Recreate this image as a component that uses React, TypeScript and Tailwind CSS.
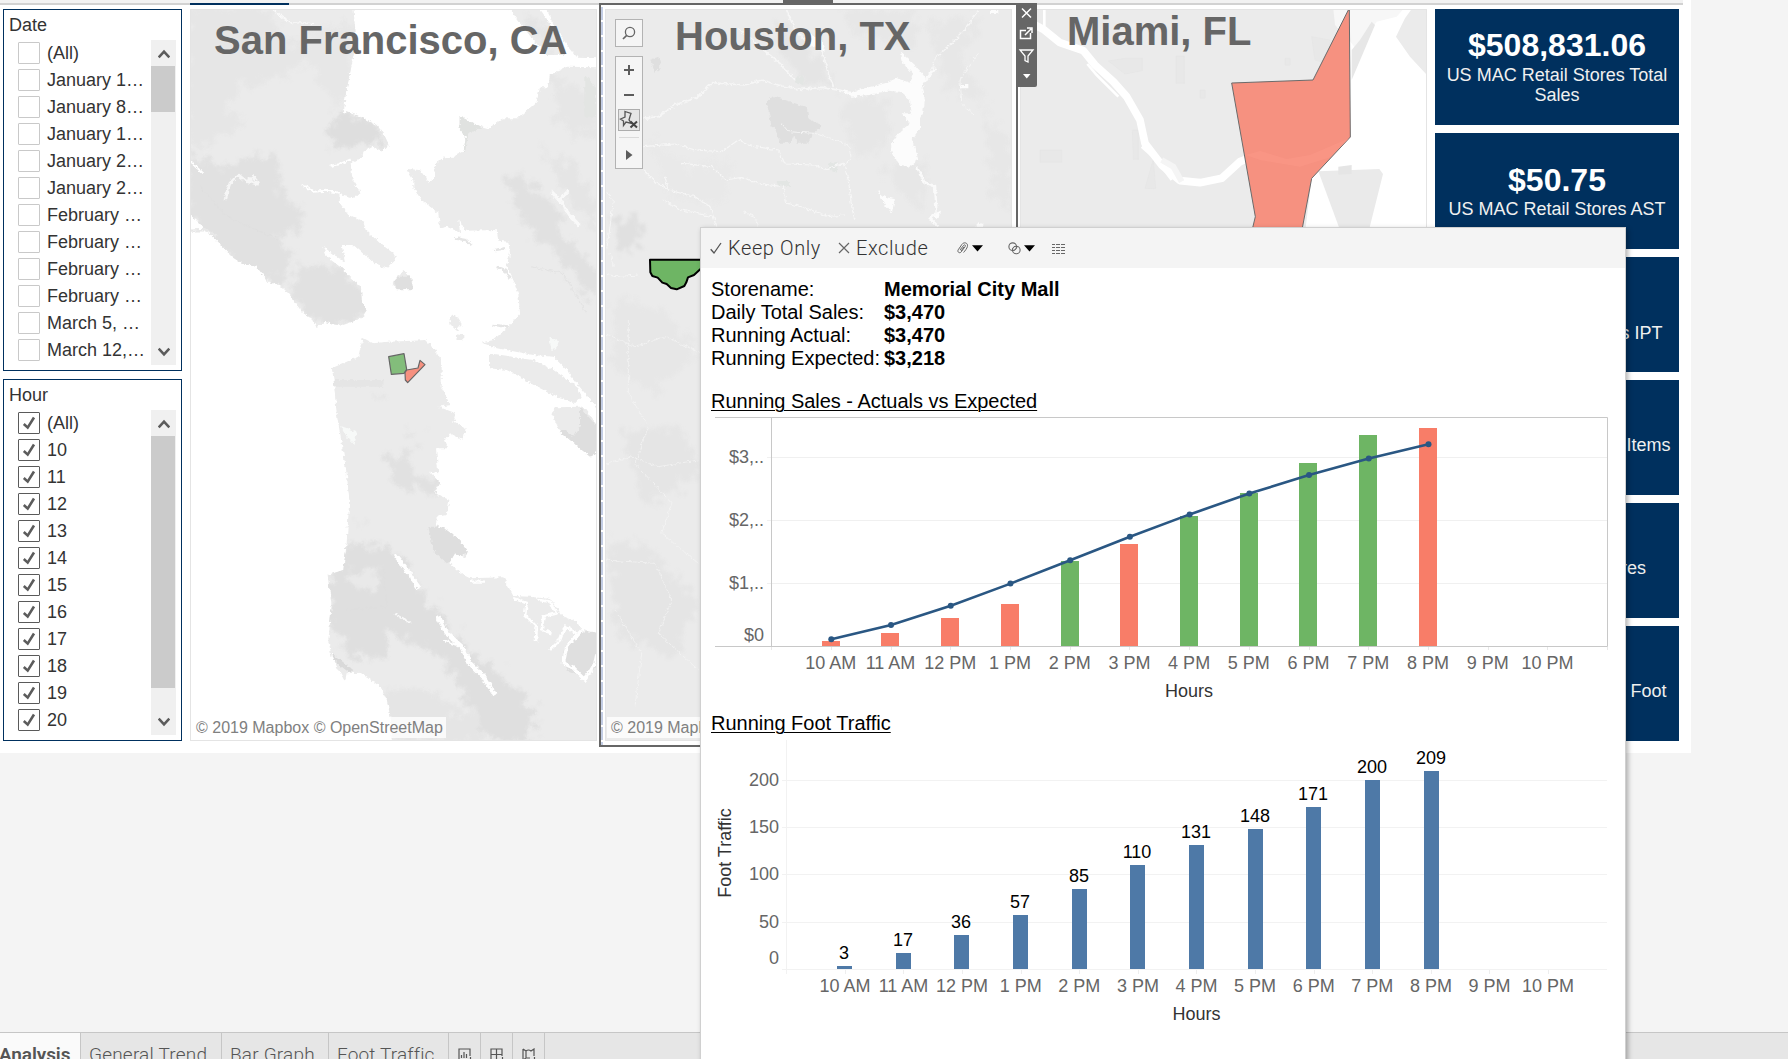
import React from "react";

const sans = "font-['Liberation_Sans',Arial,sans-serif]";

const dates = ["(All)", "January 1…", "January 8…", "January 1…", "January 2…", "January 2…", "February …", "February …", "February …", "February …", "March 5, …", "March 12,…"];
const hours = ["(All)", "10", "11", "12", "13", "14", "15", "16", "17", "18", "19", "20"];

function Chevron({ down = false }: { down?: boolean }) {
  return (
    <svg width="12" height="10" viewBox="0 0 12 10" className={down ? "rotate-180" : ""}>
      <path d="M0.7 8.3L6 2.6L11.3 8.3" fill="none" stroke="#5c5c5c" strokeWidth="2.6" />
    </svg>
  );
}

function FilterPanel({ title, items, checked, thumb }: { title: string; items: string[]; checked: boolean; thumb: string }) {
  return (
    <section className="h-[362px] w-[179px] border border-[#00305e] bg-white text-[18px] text-[#333]">
      <h2 className="h-[30px] pl-[5px] pt-[4px] leading-[22px]">{title}</h2>
      <div className="flex justify-between pr-[5px]">
        <ul className="-mt-px pl-[14px]">
          {items.map((t, i) => (
            <li key={i} className="flex h-[27px] items-center gap-[7px] whitespace-nowrap leading-[22px]">
              <span className={"flex h-[22px] w-[22px] items-center justify-center rounded-[1px] border bg-white " + (checked ? "border-[#5a5a5a]" : "border-[#c9c9c9]")}>
                {checked && (
                  <svg width="14" height="14" viewBox="0 0 14 14">
                    <path d="M1.8 8L5.7 11.6L12 1.5" fill="none" stroke="#5c5c5c" strokeWidth="2.6" />
                  </svg>
                )}
              </span>
              <span>{t}</span>
            </li>
          ))}
        </ul>
        <div className="flex h-[325px] w-[25px] flex-col justify-between bg-[#f0f0f0]">
          <div>
            <div className="flex h-[26px] items-center justify-center pt-[2px]"><Chevron /></div>
            <div className={"w-[24px] bg-[#cbcbcb] " + thumb} />
          </div>
          <div className="flex h-[26px] items-center justify-center"><Chevron down /></div>
        </div>
      </div>
    </section>
  );
}

function Defs({ id, seed }: { id: string; seed: number }) {
  return (
    <defs>
      <filter id={id + "rough"} x="0" y="0" width="100%" height="100%" colorInterpolationFilters="sRGB">
        <feTurbulence type="fractalNoise" baseFrequency="0.09" numOctaves="3" seed={seed} />
        <feDisplacementMap in="SourceGraphic" scale="14" xChannelSelector="R" yChannelSelector="G" />
      </filter>
      <filter id={id + "soft"} x="-10%" y="-10%" width="120%" height="120%" colorInterpolationFilters="sRGB">
        <feTurbulence type="fractalNoise" baseFrequency="0.03" numOctaves="4" seed={seed + 3} />
        <feDisplacementMap in="SourceGraphic" scale="90" xChannelSelector="R" yChannelSelector="G" />
        <feGaussianBlur stdDeviation="4" />
      </filter>
    </defs>
  );
}

const SF_LAND = [
  "M20 20H520L524 70L528 110L522 160L508 230L497 280L492 335L530 345L590 375L610 400L627 435L605 452L575 440L550 455L548 470L512 490L518 540L540 575L520 593L478 582L480 610L505 645L550 665L557 690L600 730L640 760L648 775L620 805L590 795L560 770L520 735L485 735L495 785L470 770L430 740L440 770L480 800L520 840L543 860L545 900L560 930L545 955L490 975L430 965L410 985L400 960L365 935L330 885L300 855L265 845L230 800L185 790L155 770L110 720L70 680L20 635Z",
  "M985 20H1075L1130 100L1160 165L1100 165L1060 120L1020 70Z",
  "M1095 20H1260V172L1190 170L1150 120L1115 60Z",
  "M1260 202L1160 200L1110 225L1105 262L1080 262L1070 305L1015 355L970 355L925 385L890 375L838 348V385L858 410L850 455L820 470L795 472L765 495L762 535L745 545L720 510L680 507L700 540V565L725 600L775 640L780 685L800 680L840 697L835 658L855 692L950 690L955 722L985 725L990 760L980 800L1000 840L1015 880L1020 940L985 980L940 1020L905 1028L950 1045L1060 1065L1120 1070L1160 1110L1190 1150L1215 1180L1260 1235Z",
  "M930 1060L1060 1080L1120 1110L1150 1130L1195 1165L1205 1190L1185 1210L1140 1195L1080 1165L1020 1130L980 1110L930 1105Z",
  "M1115 1240L1130 1222L1200 1220L1220 1228L1260 1290V1340L1235 1375L1140 1295Z",
  "M635 850L670 810L695 835L700 868L650 868Z",
  "M808 955L825 942L845 975L830 992L812 975Z",
  "M825 1003L850 1005V1020L830 1020Z",
  "M548 1013L580 1030L625 1025L700 1022L735 1020L765 1050L785 1085V1160L810 1215L775 1220L828 1240L820 1265L857 1285L850 1320L810 1300L795 1320L805 1345H768L775 1420L750 1415L780 1450L765 1480L808 1500L800 1545L770 1550L768 1575L800 1590L838 1620L865 1658L855 1672L825 1660L808 1690L850 1725L870 1735L970 1732L1000 1788L1050 1790L1110 1797L1150 1850L1190 1865L1205 1890L1260 1900V2230H636L632 2150L620 2100L600 2060L545 2018L500 2020L495 2045L455 1970L445 1920L455 1820L443 1725L490 1710L500 1630L508 1500L500 1420L485 1330L470 1240L460 1130L455 1105L500 1085L535 1070Z",
];

function SanFranciscoMap() {
  return (
    <svg className="block h-full w-full" viewBox="33 30 1215 2190" preserveAspectRatio="none">
      <Defs id="sf" seed={4} />
      <clipPath id="sfland">{SF_LAND.map((d, i) => <path key={i} d={d} />)}</clipPath>
      <g filter="url(#sfrough)">
        <g fill="#ebebeb">{SF_LAND.map((d, i) => <path key={i} d={d} />)}</g>
        <g clipPath="url(#sfland)">
          <g fill="#e1e1e1" filter="url(#sfsoft)">
            <path d="M20 20H260L300 110L400 150L330 230L200 250L130 330L200 360L90 440L20 420Z" fill="#e6e6e6" />
            <path d="M370 100L520 60V300L470 320L420 250L390 180Z" fill="#e7e7e7" />
            <path d="M20 460L130 500L250 460L300 500L310 600L370 640L360 700L300 700L340 780L300 860L180 800L20 650Z" />
            <path d="M350 800L450 790L550 870L570 940L430 985L330 890Z" />
            <path d="M440 380L500 335L580 370L625 440L540 430L460 440Z" fill="#dedede" />
            <path d="M970 530L1050 540L1120 610L1160 720L1251 800V900L1190 850L1110 740L1040 680L1000 600Z" />
            <path d="M1080 450L1180 500L1251 620V700L1150 560Z" fill="#e5e5e5" />
            <path d="M1110 220L1251 300V420L1140 380Z" fill="#e6e6e6" />
            <path d="M610 1370L690 1360L700 1410L780 1450L760 1485L650 1460Z" />
            <path d="M500 1630L640 1640L700 1740L770 1820L850 1940L960 2010L1080 2140L1040 2223H920L850 2080L780 1970L690 1930L620 1880V1980L500 1960L450 1860V1720Z" fill="#dfdfdf" />
            <path d="M490 1720L600 1700L590 1760L530 1770Z" fill="#e9e9e9" />
            <path d="M570 2080L700 2060L780 2100L900 2150V2223H640Z" fill="#e5e5e5" />
            <path d="M590 1175H615V1195H590ZM680 1300L720 1295L710 1330L680 1325ZM535 1560L570 1570L555 1595Z" fill="#e4e4e4" />
            <path d="M1020 40L1090 60L1130 140L1100 150Z" fill="#e5e5e5" />
          </g>
          <path d="M460 1140H610V1160H460Z" fill="#e5e5e5" />
          <path d="M455 1960L520 2010L510 2020L460 1980Z" fill="#d9d9d9" />
          <path d="M840 345L915 380L865 400L855 455L838 450Z" fill="#e0e2e0" />
          <path d="M1213 225L1248 260V350H1213Z" fill="#e3e5e3" />
          <path d="M745 1580L790 1580L838 1620L865 1658L800 1690L760 1650Z" fill="#dedede" />
          <path d="M1200 1220L1260 1290V1340L1235 1375L1140 1295L1150 1290L1180 1310L1200 1280Z" fill="#dedede" />
          <path d="M635 830L690 830L700 868H650Z" fill="#dfdfdf" />
          <path d="M1150 1950L1200 1900L1251 1890V2000L1210 2030L1160 2010Z" fill="#dfdfdf" />
          <path d="M60 560L140 650L230 690L300 720M1050 800L1150 820L1220 940M500 1830L620 1820L610 1700" fill="none" stroke="#dedede" strokeWidth="2" />
        </g>
        <g fill="none" stroke="#fff" strokeLinejoin="round">
          <path d="M135 600L150 550L175 525L200 545L222 530L232 552L205 545" strokeWidth="9" opacity=".7" />
          <path d="M365 553L400 575L440 572L480 578M452 497L480 492L512 478M30 485L70 520" strokeWidth="6" />
          <path d="M280 30L330 68L400 70" strokeWidth="4" opacity=".7" />
          <path d="M1115 575L1145 610L1165 640L1198 676M1140 600L1165 572" strokeWidth="10" opacity=".7" />
          <path d="M645 1665L680 1710L718 1765" strokeWidth="13" />
          <path d="M645 1842L690 1868L672 1855" strokeWidth="5" opacity=".8" />
          <path d="M775 1850L800 1900L845 1940L870 1990L910 2030L945 2085" strokeWidth="14" />
          <path d="M790 1920L830 1935" strokeWidth="6" />
          <path d="M1000 1795L1040 1810L1035 1845L1070 1880L1068 1925M1075 1800L1110 1805L1130 1840L1090 1850L1085 1890L1115 1900M1110 1950L1140 1920L1155 1880L1190 1900" strokeWidth="8" />
          <path d="M1205 1890L1160 1940L1150 1990L1180 2005L1215 2040L1245 1990L1251 1960" strokeWidth="10" />
          <path d="M870 1745H915M560 795L595 835" strokeWidth="7" />
          <path d="M30 692L80 690L110 708" stroke="#e8e8e8" strokeWidth="7" />
          <path d="M825 715L858 720L875 735M945 750L975 745M950 800L975 810L990 835M940 975L985 980" stroke="#e5e5e5" strokeWidth="8" />
        </g>
        <path d="M483 1278L530 1295L524 1335L500 1310ZM1108 1012L1140 1025L1115 1055Z" fill="#f7f9f8" />
      </g>
      <g stroke="#666" strokeWidth="3.5" strokeLinejoin="round">
        <path d="M626 1070L672 1061L680 1108L672 1120L634 1123Z" fill="#83bd7b" />
        <path d="M675 1118L680 1110L714 1104L720 1081L735 1094L683 1148L676 1140Z" fill="#f6907f" />
      </g>
    </svg>
  );
}

function HoustonMap() {
  return (
    <svg className="block h-full w-full" viewBox="33 30 1215 2190" preserveAspectRatio="none">
      <Defs id="ho" seed={9} />
      <rect x="30" y="27" width="1221" height="2196" fill="#ebebeb" />
      <g fill="#e7e7e7" filter="url(#hosoft)">
        <path d="M540 60L640 130L700 220L690 260L620 240L540 150Z" fill="#e5e5e5" />
        <path d="M730 30H960V130L850 120L760 90Z" />
        <path d="M1000 60L1160 50L1100 170L1180 300L1060 280Z" />
        <path d="M740 300L880 290L880 440L780 470Z" />
        <path d="M1170 330L1251 440V640L1190 560Z" />
        <path d="M160 420L300 500L420 480L380 620L220 590Z" fill="#e9e9e9" />
        <path d="M860 500L1000 480L980 620L900 560Z" />
        <path d="M50 660L130 655L140 740L80 760Z" fill="#e0e0e0" />
        <path d="M50 900L200 920L310 1050L180 1180L60 1100Z" />
        <path d="M80 1300L260 1280L320 1420L150 1520ZM40 1620L150 1640L310 1800L240 1980L60 1900Z" fill="#e5e5e5" />
      </g>
      <g filter="url(#horough)">
        <path d="M515 305L535 288L636 322L640 358L680 375L655 400L640 428H605L598 405L588 428H555L540 385L530 380Z" fill="#dfdfdf" />
        <path d="M165 180L190 170L198 195L182 222Z" fill="#dfdfdf" />
        <path d="M545 543H585V560H550ZM700 490L730 485L725 515L705 510ZM600 235L625 225V255L600 250Z" fill="#e3e6e4" />
      </g>
      <g fill="none" stroke="#f6f6f6" strokeWidth="3.5" filter="url(#horough)">
        <path d="M145 355L190 350L240 315L310 290L350 248L400 252L450 255L500 240L560 258L620 268L680 262L740 272" strokeWidth="5" />
        <path d="M430 85L500 145L555 190L600 240M575 30L600 90L640 130L680 150L700 220L715 258" strokeWidth="5" />
        <path d="M145 440L240 432L300 450L380 455L430 420L480 440L550 450L570 492L660 495L690 508L745 490L760 540L770 620L780 660" />
        <path d="M145 510L180 545L220 570L300 590L345 620L365 680M205 600L260 630L350 650M210 530L220 570" />
        <path d="M260 490L350 500L390 540L440 532L490 550L565 560L575 610L620 620L700 650L750 645" />
        <path d="M560 370L580 395L660 400L760 435L770 480L745 495M445 635L480 650L490 680M1100 300L1095 240L1120 200L1150 160M1100 310L1140 345" strokeWidth="2.5" />
        <path d="M1010 220L1020 175L1060 140L1110 90L1150 30" />
        <path d="M30 570L55 600L45 680L35 750M35 820L60 830L130 825M45 760L55 800" strokeWidth="2.5" />
        <path d="M30 1000L120 1040L210 1010L320 1060M100 960V1180L160 1280L120 1390L230 1510L200 1600L310 1690M30 1390L110 1370L190 1400L310 1380M30 1680L180 1690L230 1800L190 1900L310 2010M60 1830L140 1960L120 2120" strokeWidth="2" />
      </g>
      <g fill="#fcfcfc" filter="url(#horough)">
        <path d="M735 270L770 275L820 262L870 250L905 235L945 248L955 225L920 185L915 155L960 195L985 225L995 240L980 265L990 300L985 335L975 355V385L950 420L965 460L970 480L945 500L915 495L890 460L888 430L915 395L945 370L920 340L950 340L945 300L915 275L880 272L820 285L770 290Z" />
        <path d="M845 570L870 590L900 598L890 640L870 615ZM1010 640L1035 635L1030 655L1010 650ZM1185 30H1210V42H1185ZM1098 255H1120V265H1098ZM1145 670L1165 675V690H1145ZM640 100L680 120L690 155L650 135Z" />
        <path d="M965 500L990 550L1020 558L1025 640L1005 655L1030 680" fill="none" stroke="#fafafa" strokeWidth="7" />
        <path d="M990 245L1010 215L1025 205" fill="none" stroke="#fafafa" strokeWidth="6" />
      </g>
      <path d="M165 779H330V795L314 809L297 825L279 832L274 847L268 858L245 868L228 864L215 852L202 848L188 833L172 828L166 817Z" fill="#6eb564" stroke="#000" strokeWidth="6" strokeLinejoin="round" />
    </svg>
  );
}

function MiamiMap() {
  return (
    <svg className="block h-full w-full" viewBox="33 30 1215 2190" preserveAspectRatio="none">
      <rect x="30" y="27" width="1221" height="2196" fill="#ebebeb" />
      <path d="M295 183L345 175H397V212L345 222ZM498 168H523V250H498ZM570 270H585V294H570ZM90 450H155V487H90ZM367 390H385V478H370ZM405 565L430 478L437 566ZM825 175H840V195H825ZM905 110L960 120L950 190L915 180Z" fill="#e8e8e8" stroke="#e5e5e5" strokeWidth="2" />
      <path d="M975 40L1060 35L1205 27L1185 55L1175 75L1158 110L1200 170L1251 225V700H885L905 535L1020 410V150L975 70Z" fill="#fff" />
      <path d="M970 27H1180L1160 50L1100 65L1040 150L1010 110L975 75Z" fill="#f7f7f7" />
      <path d="M1085 65L1095 75L1025 240V150L1050 120Z" fill="#e7e7e7" />
      <path d="M925 514L1108 507L1119 522L1077 690H990Z" fill="#eaeaea" />
      <path d="M985 500L1025 495V522L985 524Z" fill="#e5e5e5" />
      <path d="M75 75L100 88L150 128L220 152L255 195L310 245L350 290L390 360L405 430L455 495L510 542L570 548L635 535L690 485L740 465L800 480L900 470L1015 425" fill="none" stroke="#fff" strokeWidth="23" strokeLinejoin="round" />
      <path d="M103 27V80M232 192L260 225L325 290M395 440L440 480L485 540" fill="none" stroke="#fff" strokeWidth="8" />
      <path d="M455 480L490 500L515 545" fill="none" stroke="#f5f5f5" strokeWidth="18" />
      <path d="M1015 30H1018L1021 411L905 535L874 700H724L736 650L665 249L909 240Z" fill="#f69180" stroke="#6b6b6b" strokeWidth="3" />
      <path d="M708 465L750 453L830 477L900 465L1018 415L960 472L870 500L750 480Z" fill="#fb9787" opacity=".6" />
    </svg>
  );
}

function MapPane({ title, titleClass, children, credit = true }: { title: string; titleClass: string; children: React.ReactNode; credit?: boolean }) {
  return (
    <div className="relative h-[732px] w-[407px] border border-[#e4e4e4] bg-white">
      {children}
      <h1 className={"absolute whitespace-nowrap text-[40px] font-bold leading-[46px] text-[#666] " + titleClass}>{title}</h1>
      {credit && (
        <div className="absolute bottom-[2px] left-[1px] h-[21px] whitespace-nowrap bg-white/80 pl-[4px] pr-[3px] text-[16px] leading-[21px] text-[#808080]">© 2019 Mapbox © OpenStreetMap</div>
      )}
    </div>
  );
}

function MapControls() {
  return (
    <div className="absolute left-[9px] top-[9px] flex flex-col gap-[9px]">
      <div className="flex h-[28px] w-[28px] items-center justify-center border border-[#b3b3b3] bg-[#f5f5f5]">
        <svg width="14" height="14" viewBox="0 0 14 14" fill="none" stroke="#666" strokeWidth="1.3"><circle cx="8" cy="6" r="4.6" /><path d="M4.7 9.3L1 13" strokeWidth="1.7" /></svg>
      </div>
      <svg className="border border-[#b3b3b3] bg-[#f5f5f5]" width="28" height="113" viewBox="1 1 26 111">
        <path d="M9 14H19M14 9V19M9 39H19" stroke="#5c5c5c" strokeWidth="2" />
        <rect x="3.5" y="53.5" width="21" height="21" fill="#e6e6e6" stroke="#adadad" />
        <path d="M10 55.5L16 57.5L15 60.5L14 64L16.5 67.5L11 66L8.5 69.5V65L5.5 63L10 61Z" fill="none" stroke="#555" strokeWidth="1.3" />
        <path d="M15.5 65.5L22 71.5M22 65.5L15.5 71.5" stroke="#444" strokeWidth="2" />
        <path d="M4 81.5H24" stroke="#dadada" />
        <path d="M11 94L17.5 99L11 104Z" fill="#5c5c5c" />
      </svg>
    </div>
  );
}

function SelectionFrame() {
  return (
    <>
      <div className="pointer-events-none absolute -left-[7px] -top-[7px] h-[744px] w-[419px] border-2 border-[#666]" />
      <div className="absolute -left-[5px] -top-[3px] h-[738px] w-[2px] bg-[repeating-linear-gradient(to_bottom,#c3cde4_0px,#c3cde4_13px,#fff_13px,#fff_15px)]" />
      <div className="absolute -top-[10px] left-[177px] h-[4px] w-[50px] bg-[#666]" />
      <div className="absolute -top-[7px] left-[410px] z-10 h-[84px] w-[21px] rounded-br-[2px] bg-[#666]">
        <svg width="21" height="84" viewBox="0 0 21 84" fill="none" stroke="#fff" strokeWidth="1.5">
          <path d="M6 5.5L15 14.5M15 5.5L6 14.5" />
          <path d="M10 27.5H4.5V35.5H14.5V30M9 32L15 26M11 25H16V30" />
          <path d="M4 47H17L12 53V59L9 57.5V53Z" strokeWidth="1.3" />
          <path d="M7 71H14.5L10.8 75.5Z" fill="#fff" stroke="none" />
        </svg>
      </div>
    </>
  );
}

const kpis = [
  { value: "$508,831.06", lines: ["US MAC Retail Stores Total", "Sales"], size: "h-[116px]" },
  { value: "$50.75", lines: ["US MAC Retail Stores AST"], size: "h-[116px]" },
  { value: "1.32", lines: ["US MAC Retail Stores IPT"], size: "h-[115px]" },
  { value: "13,214", lines: ["US MAC Retail Stores Items", "Sold"], size: "h-[115px]" },
  { value: "10,026", lines: ["US MAC Retail Stores", "Orders"], size: "h-[115px]" },
  { value: "42,180", lines: ["US MAC Retail Stores Foot", "Traffic"], size: "h-[115px]" },
];

const xLabels = ["10 AM", "11 AM", "12 PM", "1 PM", "2 PM", "3 PM", "4 PM", "5 PM", "6 PM", "7 PM", "8 PM", "9 PM", "10 PM"];
const GREEN = "#6eb564";
const RED = "#f87d68";
const sales = [
  { x: 822, top: 641, line: 639.2, c: RED },
  { x: 881, top: 633, line: 625, c: RED },
  { x: 941, top: 618, line: 605.8, c: RED },
  { x: 1001, top: 604, line: 583.6, c: RED },
  { x: 1061, top: 561, line: 560.3, c: GREEN },
  { x: 1120, top: 544, line: 536.7, c: RED },
  { x: 1180, top: 516, line: 514.4, c: GREEN },
  { x: 1240, top: 493, line: 493.6, c: GREEN },
  { x: 1299, top: 463, line: 475, c: GREEN },
  { x: 1359, top: 435, line: 458.4, c: GREEN },
  { x: 1419, top: 428, line: 444.3, c: RED },
];
const center = (i: number) => 831.3 + i * 59.72;

function SalesChart() {
  return (
    <svg className="block" width="925" height="296" viewBox="701 414 925 296" fontSize="18">
      <path d="M767 457.5H1607M767 520.5H1607M767 583.5H1607" stroke="#f0f0f0" />
      <path d="M715 417.5H1607.5V646.5H715M771.5 417V647" fill="none" stroke="#c8c8c8" />
      {xLabels.map((t, i) => (
        <g key={t}>
          <path d={`M${Math.floor(center(i)) + 0.5} 647V650`} stroke="#e8e8e8" />
          <text x={center(i) - 0.5} y="669" textAnchor="middle" fill="#666">{t}</text>
        </g>
      ))}
      <path d="M771.5 647V650M1607.5 647V650" stroke="#e8e8e8" />
      {sales.map((s) => <rect key={s.x} x={s.x} y={s.top} width="18" height={646 - s.top} fill={s.c} />)}
      <polyline points={sales.map((s, i) => `${center(i)},${s.line}`).join(" ")} fill="none" stroke="#2a5783" strokeWidth="2.6" />
      {sales.map((s, i) => <circle key={i} cx={center(i)} cy={s.line} r="3" fill="#2a5783" />)}
      {[["$3,..", 463], ["$2,..", 526], ["$1,..", 589], ["$0", 641]].map(([t, y]) => (
        <text key={t} x="764" y={y} textAnchor="end" fill="#666">{t}</text>
      ))}
      <text x="1189" y="697" textAnchor="middle" fill="#333">Hours</text>
    </svg>
  );
}

const traffic = [[837, 966, 3], [896, 953, 17], [954, 935, 36], [1013, 915, 57], [1072, 889, 85], [1130, 865, 110], [1189, 845, 131], [1248, 829, 148], [1306, 807, 171], [1365, 780, 200], [1424, 771, 209]];
const trafficCenter = (i: number) => 845.2 + i * 58.6;

function TrafficChart() {
  return (
    <svg className="block" width="925" height="322" viewBox="701 737 925 322" fontSize="18">
      <path d="M782 780.5H1607M782 827.5H1607M782 874.5H1607M782 922.5H1607M782 969.5H1607M786.5 740V974" stroke="#f2f2f2" />
      {xLabels.map((t, i) => (
        <g key={t}>
          <path d={`M${Math.floor(trafficCenter(i)) + 0.5} 970V974`} stroke="#eee" />
          <text x={trafficCenter(i) - 0.3} y="992" textAnchor="middle" fill="#666">{t}</text>
        </g>
      ))}
      {traffic.map(([x, top, v]) => (
        <g key={x}>
          <rect x={x} y={top} width="15" height={969 - top} fill="#4e79a7" />
          <text x={x + 7} y={top - 7} textAnchor="middle" fill="#000">{v}</text>
        </g>
      ))}
      {[[200, 786], [150, 833], [100, 880], [50, 928], [0, 964]].map(([t, y]) => (
        <text key={t} x="779" y={y} textAnchor="end" fill="#666">{t}</text>
      ))}
      <text transform="translate(731 853) rotate(-90)" textAnchor="middle" fill="#333">Foot Traffic</text>
      <text x="1196.5" y="1020" textAnchor="middle" fill="#333">Hours</text>
    </svg>
  );
}

const facts = [["Storename:", "Memorial City Mall"], ["Daily Total Sales:", "$3,470"], ["Running Actual:", "$3,470"], ["Running Expected:", "$3,218"]];

function Caret() {
  return <svg width="11" height="7" viewBox="0 0 11 7"><path d="M0 0.3H11L5.5 6.5Z" fill="#000" /></svg>;
}

function StoreTooltip() {
  return (
    <div className="absolute left-[700px] top-[227px] h-[840px] w-[926px] border border-[#d0d0d0] bg-white text-black shadow-[2px_2px_5px_rgba(0,0,0,0.3)]">
      <div className="flex h-[40px] items-center bg-[#f4f4f4] pl-[9px] font-[Roboto,sans-serif] text-[20px] font-light text-[#333]">
        <svg width="12" height="12" viewBox="0 0 12 12"><path d="M0.7 7.2L4 11L11 1" fill="none" stroke="#555" strokeWidth="1.3" /></svg>
        <span className="ml-[6px] w-[95px] whitespace-nowrap tracking-[0.6px]">Keep Only</span>
        <svg className="ml-[15px]" width="12" height="12" viewBox="0 0 12 12"><path d="M1 1L11 11M11 1L1 11" fill="none" stroke="#666" strokeWidth="1.2" /></svg>
        <span className="ml-[6px] w-[73px] whitespace-nowrap tracking-[0.6px]">Exclude</span>
        <svg className="ml-[27px]" width="13" height="13" viewBox="0 0 13 13" fill="none" stroke="#666" strokeWidth="1">
          <path d="M4 8L7.6 3.4C8.6 2.2 10 3.2 9.2 4.4L5.3 9.8C3.8 11.8 0.9 10.2 2.2 7.8L6 2.3C7.8-0.3 12.4 0.6 11.4 4.6C11 6.4 9 8.8 7.6 10.5" /><path d="M5 9L8 5" />
        </svg>
        <span className="ml-[3px] flex"><Caret /></span>
        <svg className="ml-[25px]" width="13" height="13" viewBox="0 0 13 13" fill="none" stroke="#666" strokeWidth="1.1"><circle cx="4.7" cy="4.7" r="3.8" /><circle cx="8.3" cy="8" r="3.8" /><path d="M4 7L7 4M5.5 9L9 5.5" strokeWidth=".8" /></svg>
        <span className="ml-[3px] flex"><Caret /></span>
        <svg className="ml-[17px]" width="13" height="11" viewBox="0 0 13 11" fill="none" stroke="#666" strokeWidth="1"><path d="M0 1.5H13M0 4.5H13M0 7.5H13M0 10.5H13" strokeDasharray="3 1 4 1 4 1" /></svg>
      </div>
      <div className="pl-[10px] pt-[10px] text-[20px] leading-[23px]">
        {facts.map(([k, v]) => (
          <div key={k} className="flex">
            <span className="w-[173px]">{k}</span>
            <b>{v}</b>
          </div>
        ))}
        <div className="mt-[20px] h-[24px] tracking-[-0.02px] underline decoration-1 underline-offset-2">Running Sales - Actuals vs Expected</div>
      </div>
      <SalesChart />
      <div className="relative z-10 h-[27px] pl-[10px] pt-[2px] text-[20px] leading-[23px] underline decoration-1 underline-offset-2">Running Foot Traffic</div>
      <TrafficChart />
    </div>
  );
}

function SheetTabs() {
  const tab = "h-full shrink-0 overflow-hidden border-r border-[#c6c6c6] pt-[10px] leading-[23px] whitespace-nowrap";
  const icon = "flex h-full w-[32px] shrink-0 justify-center border-r border-[#c6c6c6] pl-[2px] pt-[15px]";
  const art = { width: 16, height: 16, viewBox: "0 0 16 16", fill: "none", stroke: "#555", strokeWidth: 1.2 };
  return (
    <nav className="absolute bottom-0 left-0 flex h-[27px] w-full overflow-hidden border-t border-[#c6c6c6] bg-[#e6e6e6] font-[Roboto,sans-serif] text-[19px] font-light text-[#555]">
      <div className={tab + " -ml-px w-[82px] bg-[#fafafa] font-semibold tracking-[-0.1px]"}>Analysis</div>
      <div className={tab + " w-[141px] pl-[8px] tracking-[0.2px]"}>General Trend</div>
      <div className={tab + " w-[107px] pl-[8px] tracking-[0.2px]"}>Bar Graph</div>
      <div className={tab + " w-[120px] pl-[8px] tracking-[0.15px]"}>Foot Traffic</div>
      <div className={icon}><svg {...art}><path d="M8 12H1V1H12V8M3.5 10V7M6 10V4M8.5 10V6M12.5 9V16M9 12.5H16" /></svg></div>
      <div className={icon}><svg {...art}><path d="M9 11.5H1V1H12V8M1 6.5H12M6.5 1V11.5M12.5 9V16M9 12.5H16" /></svg></div>
      <div className={icon}><svg {...art}><path d="M1 1L4 3Q6.5 1 9 3L12 1V8M1 1V12L4 10H8M4 3V10M12.5 9V16M9 12.5H16" /></svg></div>
    </nav>
  );
}

export default function App() {
  return (
    <main className={"relative h-[1059px] w-[1788px] overflow-hidden bg-[#f4f4f4] " + sans}>
      <div className="h-[753px] w-[1691px] bg-white">
        <div className="h-[3px] w-[1683px] bg-[#f2f2f2]" />
        <div className="flex h-[2px] w-[1683px] bg-[#d2d2d2] pl-[190px]"><div className="w-[99px] bg-[#00305e]" /></div>
        <div className="flex gap-[8px] pl-[3px] pt-[4px]">
          <div className="flex flex-col gap-[8px]">
            <FilterPanel title="Date" items={dates} checked={false} thumb="h-[46px]" />
            <FilterPanel title="Hour" items={hours} checked thumb="h-[252px]" />
          </div>
          <MapPane title="San Francisco, CA" titleClass="left-[23px] top-[7px]"><SanFranciscoMap /></MapPane>
          <MapPane title="Houston, TX" titleClass="left-[69px] top-[3px]">
            <HoustonMap />
            <MapControls />
            <SelectionFrame />
          </MapPane>
          <MapPane title="Miami, FL" titleClass="left-[46px] top-[-2px]" credit={false}><MiamiMap /></MapPane>
          <div className="flex w-[244px] flex-col gap-[8px]">
            {kpis.map((k) => (
              <div key={k.value} className={"flex flex-col items-center justify-center bg-[#00305e] text-[18px] leading-[20px] text-[#f0f0f0] " + k.size + (k.lines.length > 1 ? " pb-[2px]" : "")}>
                <strong className={"text-[32px] leading-[34px] text-white " + (k.lines.length > 1 ? "mb-[3px]" : "mb-[2px]")}>{k.value}</strong>
                {k.lines.map((l) => <span key={l} className="whitespace-nowrap">{l}</span>)}
              </div>
            ))}
          </div>
        </div>
      </div>
      <SheetTabs />
      <StoreTooltip />
    </main>
  );
}
